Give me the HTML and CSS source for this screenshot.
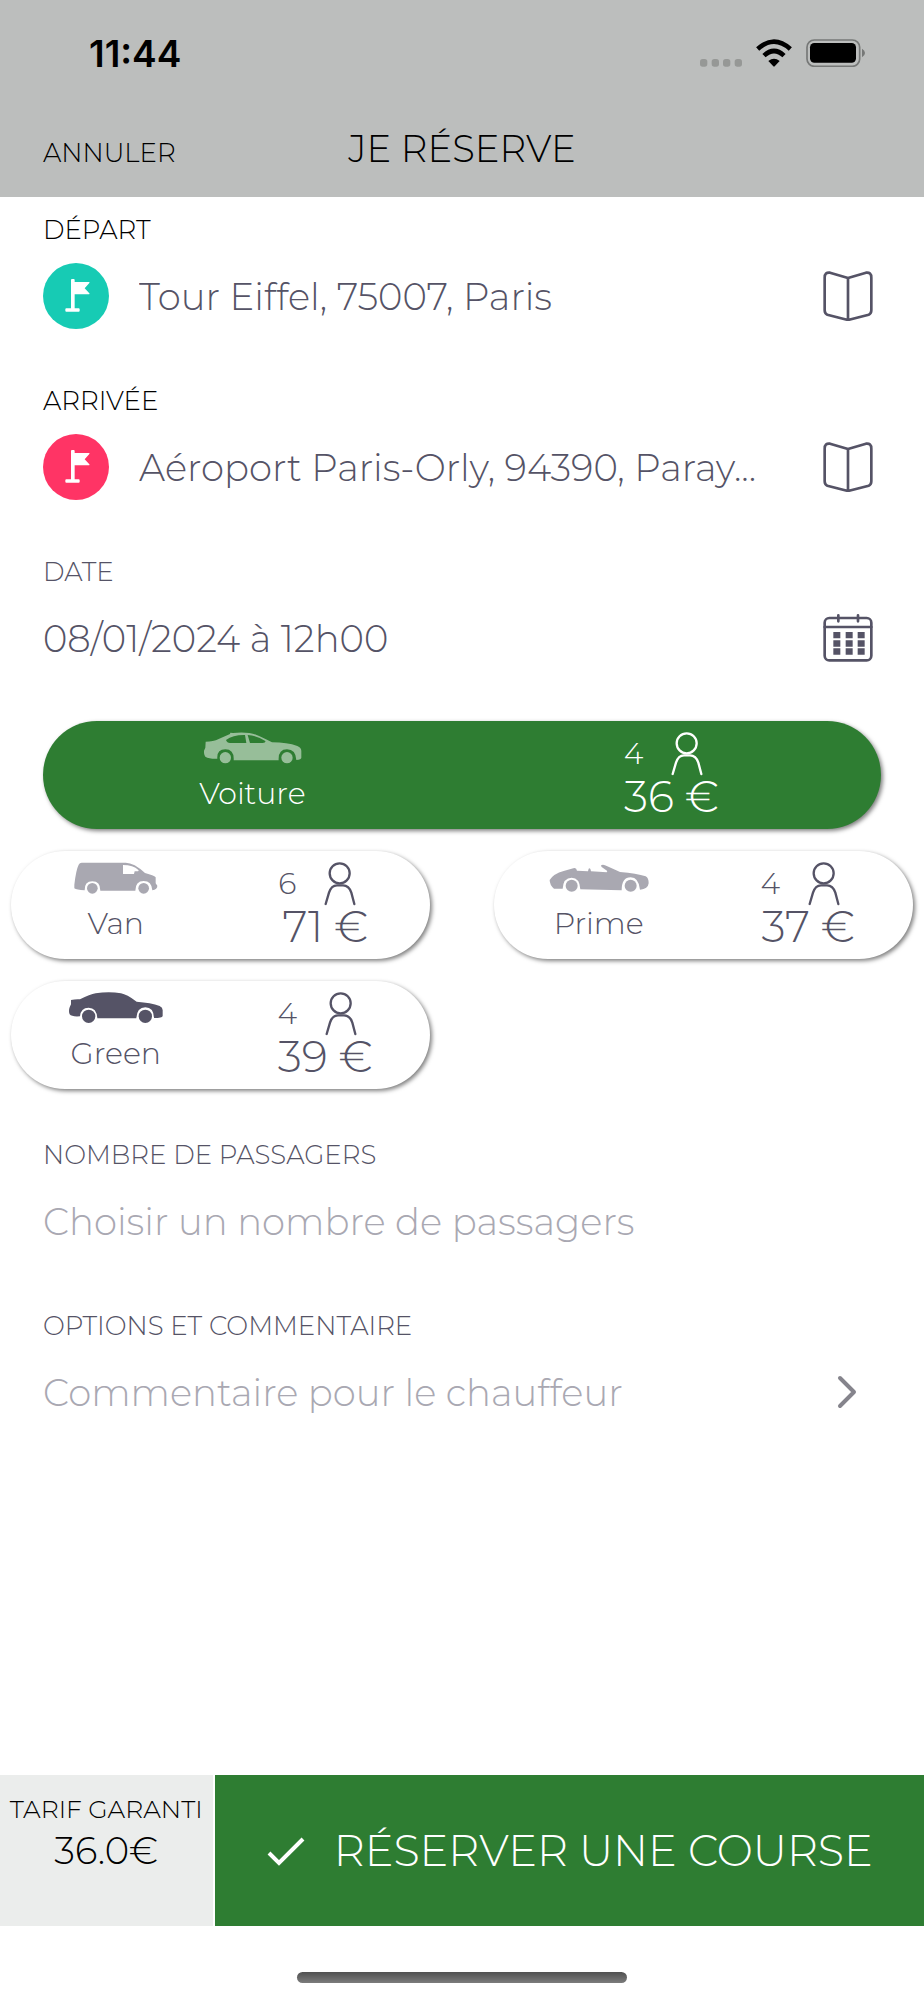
FILE: index.html
```html
<!DOCTYPE html>
<html lang="fr">
  <head>
    <meta charset="UTF-8" />
    <meta name="viewport" content="width=device-width, initial-scale=1.0" />
    <title>Je réserve</title>
    <link rel="stylesheet" href="styles.css">
  </head>
  <body>
    <!-- shared icons -->
    <svg class="sprite" aria-hidden="true">
      <symbol id="flag" viewBox="0 0 198 198">
        <path d="M84 51q0-3 3-3h5q3 0 3 3v6h43q3 0 1 3l-14 16 14 15q2 3-1 3H95v42h12q3 0 3 3v4q0 3-3 3H70q-3 0-3-3v-4q0-3 3-3h14z" fill="#fff" />
      </symbol>
      <symbol id="book" viewBox="0 0 150 150">
        <path d="M75 21 21 5Q5 3 5 20v98q0 10 8 13l62 16 62-16q8-3 8-13V20q0-17-16-15zv126" fill="none" stroke="currentColor" stroke-width="8" stroke-linejoin="round" />
      </symbol>
      <symbol id="person" viewBox="578 576 192 132">
        <g fill="none" stroke="currentColor" stroke-width="7" stroke-linecap="round">
          <circle cx="673" cy="610" r="30" />
          <path d="M631 702 641 668Q648 646 665 646H683Q701 646 708 668L717 702" />
        </g>
      </symbol>
    </svg>

    <header>
      <div class="status">
        <span class="clock">11:44</span>
        <div class="status-icons">
          <svg width="42" height="28" viewBox="0 0 126 84" fill="#969896">
            <rect y="60" width="22" height="23" rx="8" />
            <rect x="35" y="60" width="22" height="23" rx="8" />
            <rect x="69" y="60" width="22" height="23" rx="8" />
            <rect x="104" y="60" width="22" height="23" rx="8" />
          </svg>
          <svg width="36" height="28" viewBox="0 0 108 84">
            <path d="M5 30Q54-14 103 30M24 50Q54 22 84 50" fill="none" stroke="#000" stroke-width="14" />
            <path d="M37 66q17-14 34 0L56 82q-2 2-4 0z" />
          </svg>
          <svg width="60" height="28" viewBox="0 0 180 84">
            <rect x="3" y="3" width="158" height="79" rx="22" fill="none" stroke="#767877" stroke-width="5" />
            <rect x="12" y="12" width="138" height="59" rx="13" />
            <path d="M168 29q9 5 9 13t-9 13z" fill="#767877" />
          </svg>
        </div>
      </div>
      <nav>
        <button class="cancel" type="button">ANNULER</button>
        <h1>JE RÉSERVE</h1>
      </nav>
    </header>

    <form>
      <div class="field strong">
        <label for="depart">DÉPART</label>
        <div class="row">
          <svg class="pin teal"><use href="#flag" /></svg>
          <input id="depart" type="text" value="Tour Eiffel, 75007, Paris" />
          <button class="icon-btn" type="button" aria-label="Adresses"><svg width="50" height="50"><use href="#book" /></svg></button>
        </div>
      </div>

      <div class="field strong">
        <label for="arrivee">ARRIVÉE</label>
        <div class="row">
          <svg class="pin pink"><use href="#flag" /></svg>
          <input id="arrivee" type="text" value="Aéroport Paris-Orly, 94390, Paray..." />
          <button class="icon-btn" type="button" aria-label="Adresses"><svg width="50" height="50"><use href="#book" /></svg></button>
        </div>
      </div>

      <div class="field">
        <label for="date">DATE</label>
        <div class="row">
          <input id="date" type="text" value="08/01/2024 à 12h00" />
          <button class="icon-btn" type="button" aria-label="Calendrier">
            <svg width="50" height="50" viewBox="0 0 150 150" fill="currentColor">
              <rect x="5" y="15" width="140" height="127" rx="14" fill="none" stroke="currentColor" stroke-width="8" />
              <path d="M5 42h140M46 7v18M105 7v18" stroke="currentColor" stroke-width="8" stroke-linecap="round" />
              <path d="M31 57h21v19H31zM68 57h21v19H68zM104 57h21v19h-21zM31 82h21v19H31zM68 82h21v19H68zM104 82h21v19h-21zM31 106h21v19H31zM68 106h21v19H68zM104 106h21v19h-21z" />
            </svg>
          </button>
        </div>
      </div>

      <div class="cars">
        <label class="car">
          <input type="radio" name="car" value="voiture" checked />
          <span class="kind">
            <svg class="faded" width="98" height="32" viewBox="612 574 294 96" fill="currentColor">
              <path fill-rule="evenodd" d="M617 603Q640 603 656 595L690 580 691 576 699 577Q742 573 768 582 785 588 816 605 862 605 892 616 904 621 904 631V651Q904 656 889 658 887 626 861 626 834 626 836 659H701Q703 626 676 626 650 626 652 654 628 655 616 648 611 642 612 630L616 621zM678 598Q681 607 690 607H739L735 583Q700 582 678 598zM743 583 750 607H788Q798 607 796 601 771 585 743 583z" />
              <circle cx="676" cy="651" r="17" />
              <circle cx="861" cy="651" r="17" />
            </svg>
            <span class="name">Voiture</span>
          </span>
          <span class="offer">
            <span class="seats">4 <svg width="64" height="44"><use href="#person" /></svg></span>
            <span class="price">36 €</span>
          </span>
        </label>

        <label class="car">
          <input type="radio" name="car" value="van" />
          <span class="kind">
            <svg class="faded" width="84" height="32" viewBox="221 94 252 96" fill="currentColor">
              <path fill-rule="evenodd" d="M244 96H376Q401 96 434 127 461 134 466 140V158L471 165Q471 176 456 179 454 151 430 151 405 151 405 180H300Q300 152 276 152 252 152 253 179 228 178 222 173V162Q227 118 235 102 238 96 244 96zM368 103V130H401L403 122H410Q417 122 414 118 399 103 368 103z" />
              <circle cx="276" cy="173" r="16" />
              <circle cx="430" cy="173" r="16" />
            </svg>
            <span class="name">Van</span>
          </span>
          <span class="offer">
            <span class="seats">6 <svg width="64" height="44"><use href="#person" /></svg></span>
            <span class="price">71 €</span>
          </span>
        </label>

        <label class="car">
          <input type="radio" name="car" value="prime" />
          <span class="kind">
            <svg class="faded" width="100" height="32" viewBox="262 94 300 96" fill="currentColor">
              <path d="M264 148Q276 129 306 121L335 113Q344 110 346 120L379 122 381 114Q386 109 388 122L435 125 437 121 420 109Q415 102 424 102 431 103 475 124 525 128 552 137 561 142 561 158 559 175 535 177 531 140 507 140 480 140 480 179L356 176Q354 141 330 141 305 141 303 174H277Q264 163 264 148z" />
              <circle cx="330" cy="165" r="18" />
              <circle cx="507" cy="165" r="18" />
            </svg>
            <span class="name">Prime</span>
          </span>
          <span class="offer">
            <span class="seats">4 <svg width="64" height="44"><use href="#person" /></svg></span>
            <span class="price">37 €</span>
          </span>
        </label>

        <label class="car">
          <input type="radio" name="car" value="green" />
          <span class="kind">
            <svg width="94" height="32" viewBox="205 484 282 96" fill="currentColor">
              <path d="M211 508Q225 505 238 506 268 491 285 488 325 482 361 488 378 491 408 513 451 516 477 526 487 531 486 540V556Q485 562 460 562 459 530 434 530 409 530 407 563H290Q288 531 264 531 240 531 238 557 213 559 207 551 203 541 207 530L211 521z" />
              <circle cx="264" cy="557" r="20" />
              <circle cx="434" cy="557" r="20" />
            </svg>
            <span class="name">Green</span>
          </span>
          <span class="offer">
            <span class="seats">4 <svg width="64" height="44"><use href="#person" /></svg></span>
            <span class="price">39 €</span>
          </span>
        </label>
      </div>

      <div class="field">
        <label for="passagers">NOMBRE DE PASSAGERS</label>
        <div class="row">
          <select id="passagers">
            <option value="">Choisir un nombre de passagers</option>
            <option>1</option>
            <option>2</option>
            <option>3</option>
            <option>4</option>
          </select>
        </div>
      </div>

      <div class="field">
        <label for="commentaire">OPTIONS ET COMMENTAIRE</label>
        <div class="row">
          <input id="commentaire" type="text" placeholder="Commentaire pour le chauffeur" />
          <button class="icon-btn chevron" type="button" aria-label="Ouvrir">
            <svg width="50" height="50" viewBox="0 0 50 50"><path d="M17 11 31 25 17 39" fill="none" stroke="currentColor" stroke-width="4" stroke-linecap="round" stroke-linejoin="round" /></svg>
          </button>
        </div>
      </div>
    </form>

    <footer>
      <div class="tarif">
        <span>TARIF GARANTI</span>
        <span class="amount">36.0€</span>
      </div>
      <button class="book" type="button">
        <svg width="40" height="32" viewBox="0 0 40 32"><path d="M3 18 13 28 37 4" fill="none" stroke="#fff" stroke-width="4" /></svg>
        RÉSERVER UNE COURSE
      </button>
    </footer>
    <div class="home"></div>
  </body>
</html>
```
FILE: styles.css
```css
* {
  margin: 0;
  padding: 0;
  box-sizing: border-box;
}
body {
  min-height: 100vh;
  display: flex;
  flex-direction: column;
  background: #fff;
  color: #555366;
  font-family: Montserrat, Inter, sans-serif;
  font-weight: 350;
  font-size: 37px;
}
button,
input,
select {
  font: inherit;
  color: inherit;
  background: none;
  border: none;
  appearance: none;
}
svg {
  flex: none;
}
.sprite {
  position: absolute;
  width: 0;
  height: 0;
}

/* top bar */
header {
  background: #bcbebd;
  color: #000;
  padding: 31px 43px 20px;
}
.status {
  display: flex;
  justify-content: space-between;
  align-items: center;
  height: 44px;
  padding: 0 15px 0 46px;
}
.clock {
  font-family: Inter, sans-serif;
  font-weight: 600;
}
.status-icons {
  display: flex;
  gap: 14px;
}
nav {
  display: grid;
  grid-template-columns: 1fr auto 1fr;
  align-items: baseline;
  margin-top: 50px;
  line-height: 48px;
}
.cancel {
  justify-self: start;
  font-size: 26px;
}
h1 {
  font-size: 37px;
  font-weight: 350;
}

/* form */
form {
  flex: 1;
}
.field {
  padding: 16px 43px 39px;
}
.field label {
  display: block;
  margin-bottom: 16px;
  font-size: 26px;
  line-height: 34px;
}
.strong label {
  color: #000;
}
.row {
  display: flex;
  align-items: center;
  height: 66px;
}
.row input,
.row select {
  flex: 1;
  min-width: 0;
  height: 66px;
  text-overflow: ellipsis;
}
.row select,
.row input::placeholder {
  color: #a9a8b2;
  opacity: 1;
}
.pin {
  width: 66px;
  height: 66px;
  margin-right: 30px;
  border-radius: 50%;
}
.teal {
  background: #17cbb4;
}
.pink {
  background: #ff3465;
}
.icon-btn {
  display: flex;
  margin-right: -12px;
  padding: 8px 20px;
}
.chevron {
  color: #85848c;
}

/* car choice */
.cars {
  display: grid;
  grid-template-columns: 1fr 1fr;
  gap: 22px 64px;
  padding: 11px 11px 33px;
}
.car {
  display: grid;
  grid-template-columns: 1fr 1fr;
  height: 108px;
  padding-top: 11px;
  border-radius: 54px;
  background: #fff;
  box-shadow: 2px 2px 4px rgba(0, 0, 0, 0.5);
}
.car:first-child {
  grid-column: 1 / 3;
  margin: 0 32px;
}
.car:has(input:checked) {
  background: #2e7d32;
  color: #fff;
}
.car input {
  position: absolute;
  opacity: 0;
}
.kind,
.offer {
  display: flex;
  flex-direction: column;
  align-items: center;
}
.faded {
  opacity: 0.5;
}
.name {
  margin-top: 12px;
  font-size: 30px;
  line-height: 36px;
}
.seats {
  display: flex;
  align-items: center;
  gap: 12px;
  font-size: 30px;
  line-height: 44px;
}
.price {
  font-size: 43px;
  line-height: 42px;
}

/* bottom bar */
footer {
  display: flex;
  gap: 2px;
  height: 151px;
  color: #000;
}
.tarif {
  width: 23%;
  display: flex;
  flex-direction: column;
  align-items: center;
  padding-top: 18px;
  background: #ebedec;
  font-size: 25px;
  line-height: 32px;
  white-space: nowrap;
}
.amount {
  font-size: 37px;
  line-height: 52px;
}
.book {
  flex: 1;
  display: flex;
  justify-content: center;
  align-items: center;
  gap: 28px;
  background: #2e7d32;
  color: #fff;
  font-size: 43px;
}
.home {
  width: 330px;
  height: 11px;
  margin: 46px auto 17px;
  border-radius: 6px;
  background: linear-gradient(#505050, #7c7c7c);
}
```
